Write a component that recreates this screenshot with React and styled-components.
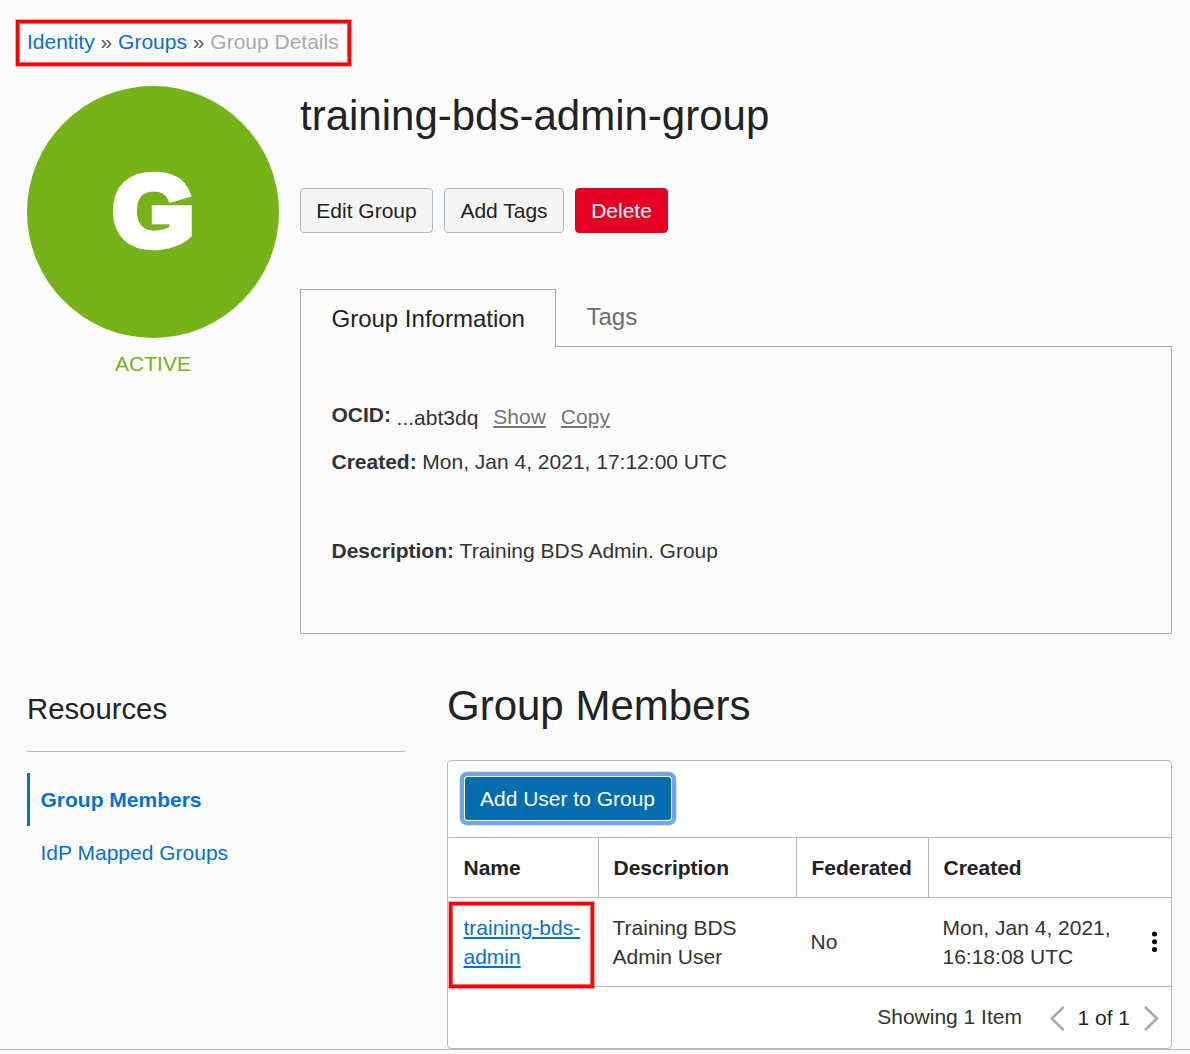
import React from 'react';
import styled, { createGlobalStyle, css } from 'styled-components';

const GlobalStyle = createGlobalStyle`
  *, *::before, *::after { box-sizing: border-box; }
  body {
    margin: 0;
    background: #fcfcfc;
    color: #333;
    font: 21px/29px "Liberation Sans", Arial, sans-serif;
  }
  a { color: #0572ce; }
  h1, h2, p { margin: 0; font-weight: 400; }
`;

const Page = styled.div`
  position: relative;
  height: 1054px;
  overflow: hidden;
`;

const Content = styled.main`
  height: 1050px;
  padding: 30px 18px 0 27px;
  border-bottom: 1px solid #b8bdc5;
`;

const highlight = css`
  content: '';
  position: absolute;
  border: 3px solid #f00;
  box-shadow: 0 0 0 1px rgba(255, 0, 0, 0.35), inset 0 0 0 1px rgba(255, 0, 0, 0.6);
  pointer-events: none;
`;

const Breadcrumb = styled.nav`
  position: relative;
  width: fit-content;
  height: 24px;
  line-height: 24px;
  white-space: pre;
  color: #555;
  a { text-decoration: none; }
  &::after {
    ${highlight}
    left: -11px;
    top: -10px;
    width: 335px;
    height: 46px;
  }
`;

const Current = styled.span`
  color: #aaa;
`;

const Summary = styled.section`
  display: grid;
  grid-template-columns: 252px 1fr;
  column-gap: 21px;
  height: 580px;
`;

const Status = styled.div`
  padding-top: 32px;
  text-align: center;
  color: #76b318;
  line-height: 24px;
`;

const Avatar = styled.div`
  display: flex;
  align-items: center;
  justify-content: center;
  width: 252px;
  height: 252px;
  margin-bottom: 14px;
  border-radius: 50%;
  background: #76b318;
`;

const Initial = styled.span`
  margin: 0 0 3px 2px;
  color: #fff;
  font-size: 99px;
  font-weight: 700;
  line-height: 100px;
  -webkit-text-stroke: 8.5px #fff;
  transform: scaleX(1.045);
`;

const Details = styled.div`
  padding-top: 38px;
`;

const Title = styled.h1`
  font-size: 42px;
  line-height: 48px;
  color: #222;
`;

const Actions = styled.div`
  display: flex;
  gap: 11px;
  margin: 48px 0 56px;
`;

const Button = styled.button`
  width: ${(p) => p.$width}px;
  height: 45px;
  padding: 0;
  border: 1px solid ${(p) => (p.$danger ? '#e60023' : '#b3b9c3')};
  border-radius: 4px;
  background: ${(p) => (p.$danger ? '#e60023' : '#f5f5f5')};
  color: ${(p) => (p.$danger ? '#fff' : '#222')};
  font: inherit;
`;

const Tabs = styled.div`
  display: flex;
  height: 58px;
`;

const Tab = styled.div`
  font-size: 24px;
  line-height: 28px;
  ${(p) =>
    p.$active
      ? css`
          width: 256px;
          padding: 15px 0 0 30.5px;
          border: 1px solid #aaa;
          border-bottom: 0;
          color: #222;
        `
      : css`
          flex: 1;
          padding: 14px 0 0 30.5px;
          border-bottom: 1px solid #aaa;
          color: #6b6b6b;
        `}
`;

const Panel = styled.div`
  height: 287px;
  padding: 56px 0 0 30.5px;
  border: 1px solid #aaa;
  border-top: 0;
`;

const Field = styled.div`
  display: flex;
  align-items: flex-start;
  height: ${(p) => p.$height}px;
  line-height: 24px;
  b { margin-right: 5.6px; }
`;

const Value = styled.span`
  padding-top: ${(p) => p.$drop || 0}px;
`;

const QuietLink = styled.a`
  && { color: #757575; }
  margin-left: 15px;
  padding-top: 2px;
  text-decoration: underline;
  text-decoration-thickness: 2px;
  text-underline-offset: 2px;
`;

const Lower = styled.section`
  display: grid;
  grid-template-columns: 378px 1fr;
  column-gap: 42px;
`;

const Sidebar = styled.aside`
  padding-top: 57px;
`;

const SideTitle = styled.h2`
  height: 61px;
  font-size: 29.3px;
  line-height: 36px;
  color: #222;
  border-bottom: 1px solid #b8bdc0;
  margin-bottom: 21px;
`;

const SideItem = styled.a`
  display: block;
  height: 53px;
  padding-left: ${(p) => (p.$active ? 10.5 : 13.5)}px;
  border-left: ${(p) => (p.$active ? '3px solid #0572ce' : '0')};
  font-weight: ${(p) => (p.$active ? 700 : 400)};
  line-height: 53px;
  text-decoration: none;
`;

const Members = styled.div`
  padding-top: 48px;
`;

const SectionTitle = styled(Title)`
  margin-bottom: 30px;
`;

const Card = styled.div`
  height: 289px;
  border: 1px solid #b3b9c3;
  border-radius: 4px;
  background: #fff;
  padding-left: 1px;
`;

const Toolbar = styled.div`
  height: 77px;
  padding: 16px 0 0 16px;
  border-bottom: 1px solid #b3b9c3;
`;

const PrimaryButton = styled.button`
  display: block;
  width: 206px;
  height: 43px;
  padding: 0 1px 0 0;
  border: 0;
  border-radius: 3px;
  background: #046db0;
  color: #fff;
  font: inherit;
  box-shadow: 0 0 0 1px #fff, 0 0 0 5px #73a5e2, 0 0 0 5.5px #a5c6ed;
`;

const Row = styled.div`
  display: grid;
  grid-template-columns: 150px 198px 132px 1fr;
  height: ${(p) => p.$height}px;
  border-bottom: 1px solid #b3b9c3;
`;

const HeadCell = styled.div`
  padding-left: 14.5px;
  border-right: 1px solid #b3b9c3;
  color: #222;
  font-weight: 700;
  line-height: 60px;
  &:last-child { border-right: 0; }
`;

const Cell = styled.div`
  position: relative;
  display: flex;
  align-items: center;
  justify-content: space-between;
  padding: ${(p) => (p.$single ? '0 13px 1px 13.5px' : '0 13px 0 13.5px')};
`;

const NameCell = styled(Cell)`
  padding: 0 0 0 14.5px;
  a {
    text-decoration-thickness: 2px;
    text-underline-offset: 2px;
  }
  &::after {
    ${highlight}
    left: 0;
    top: 4px;
    width: 145px;
    height: 86px;
  }
`;

const Footer = styled.div`
  display: flex;
  align-items: center;
  justify-content: flex-end;
  height: 61px;
  padding-right: 12px;
`;

const ItemCount = styled.span`
  margin: 0 27.5px 2px 0;
`;

const PageCount = styled.span`
  margin: 0 14px 0 13px;
  color: #222;
`;

const Chevron = ({ right }) => (
  <svg width="15" height="26" viewBox="0 0 15 26" fill="none" stroke="#aaa" strokeWidth="2.6">
    <path d={right ? 'M1 2 L13 13.5 L1 25' : 'M14.7 2 L2.7 13.5 L14.7 25'} />
  </svg>
);

const Kebab = () => (
  <svg width="7" height="22" viewBox="0 0 7 22" fill="#000">
    <circle cx="3.5" cy="3" r="2.5" />
    <circle cx="3.5" cy="10.8" r="2.5" />
    <circle cx="3.5" cy="18.6" r="2.5" />
  </svg>
);

export default function App() {
  return (
    <Page>
      <GlobalStyle />
      <Content>
        <Breadcrumb>
          <a href="#identity">Identity</a> » <a href="#groups">Groups</a> » <Current>Group Details</Current>
        </Breadcrumb>
        <Summary>
          <Status>
            <Avatar><Initial>G</Initial></Avatar>
            ACTIVE
          </Status>
          <Details>
            <Title>training-bds-admin-group</Title>
            <Actions>
              <Button $width={133}>Edit Group</Button>
              <Button $width={120}>Add Tags</Button>
              <Button $width={93} $danger>Delete</Button>
            </Actions>
            <Tabs>
              <Tab $active>Group Information</Tab>
              <Tab>Tags</Tab>
            </Tabs>
            <Panel>
              <Field $height={47}>
                <b>OCID:</b>
                <Value $drop={3}>...abt3dq</Value>
                <QuietLink href="#show">Show</QuietLink>
                <QuietLink href="#copy">Copy</QuietLink>
              </Field>
              <Field $height={89}>
                <b>Created:</b>
                <Value>Mon, Jan 4, 2021, 17:12:00 UTC</Value>
              </Field>
              <Field $height={24}>
                <b>Description:</b>
                <Value>Training BDS Admin. Group</Value>
              </Field>
            </Panel>
          </Details>
        </Summary>
        <Lower>
          <Sidebar>
            <SideTitle>Resources</SideTitle>
            <SideItem href="#members" $active>Group Members</SideItem>
            <SideItem href="#idp">IdP Mapped Groups</SideItem>
          </Sidebar>
          <Members>
            <SectionTitle as="h2">Group Members</SectionTitle>
            <Card>
              <Toolbar>
                <PrimaryButton>Add User to Group</PrimaryButton>
              </Toolbar>
              <Row $height={60}>
                <HeadCell>Name</HeadCell>
                <HeadCell>Description</HeadCell>
                <HeadCell>Federated</HeadCell>
                <HeadCell>Created</HeadCell>
              </Row>
              <Row $height={89}>
                <NameCell><a href="#user">training-bds-<br />admin</a></NameCell>
                <Cell>Training BDS<br />Admin User</Cell>
                <Cell $single>No</Cell>
                <Cell><span>Mon, Jan 4, 2021,<br />16:18:08 UTC</span><Kebab /></Cell>
              </Row>
              <Footer>
                <ItemCount>Showing 1 Item</ItemCount>
                <Chevron />
                <PageCount>1 of 1</PageCount>
                <Chevron right />
              </Footer>
            </Card>
          </Members>
        </Lower>
      </Content>
    </Page>
  );
}
